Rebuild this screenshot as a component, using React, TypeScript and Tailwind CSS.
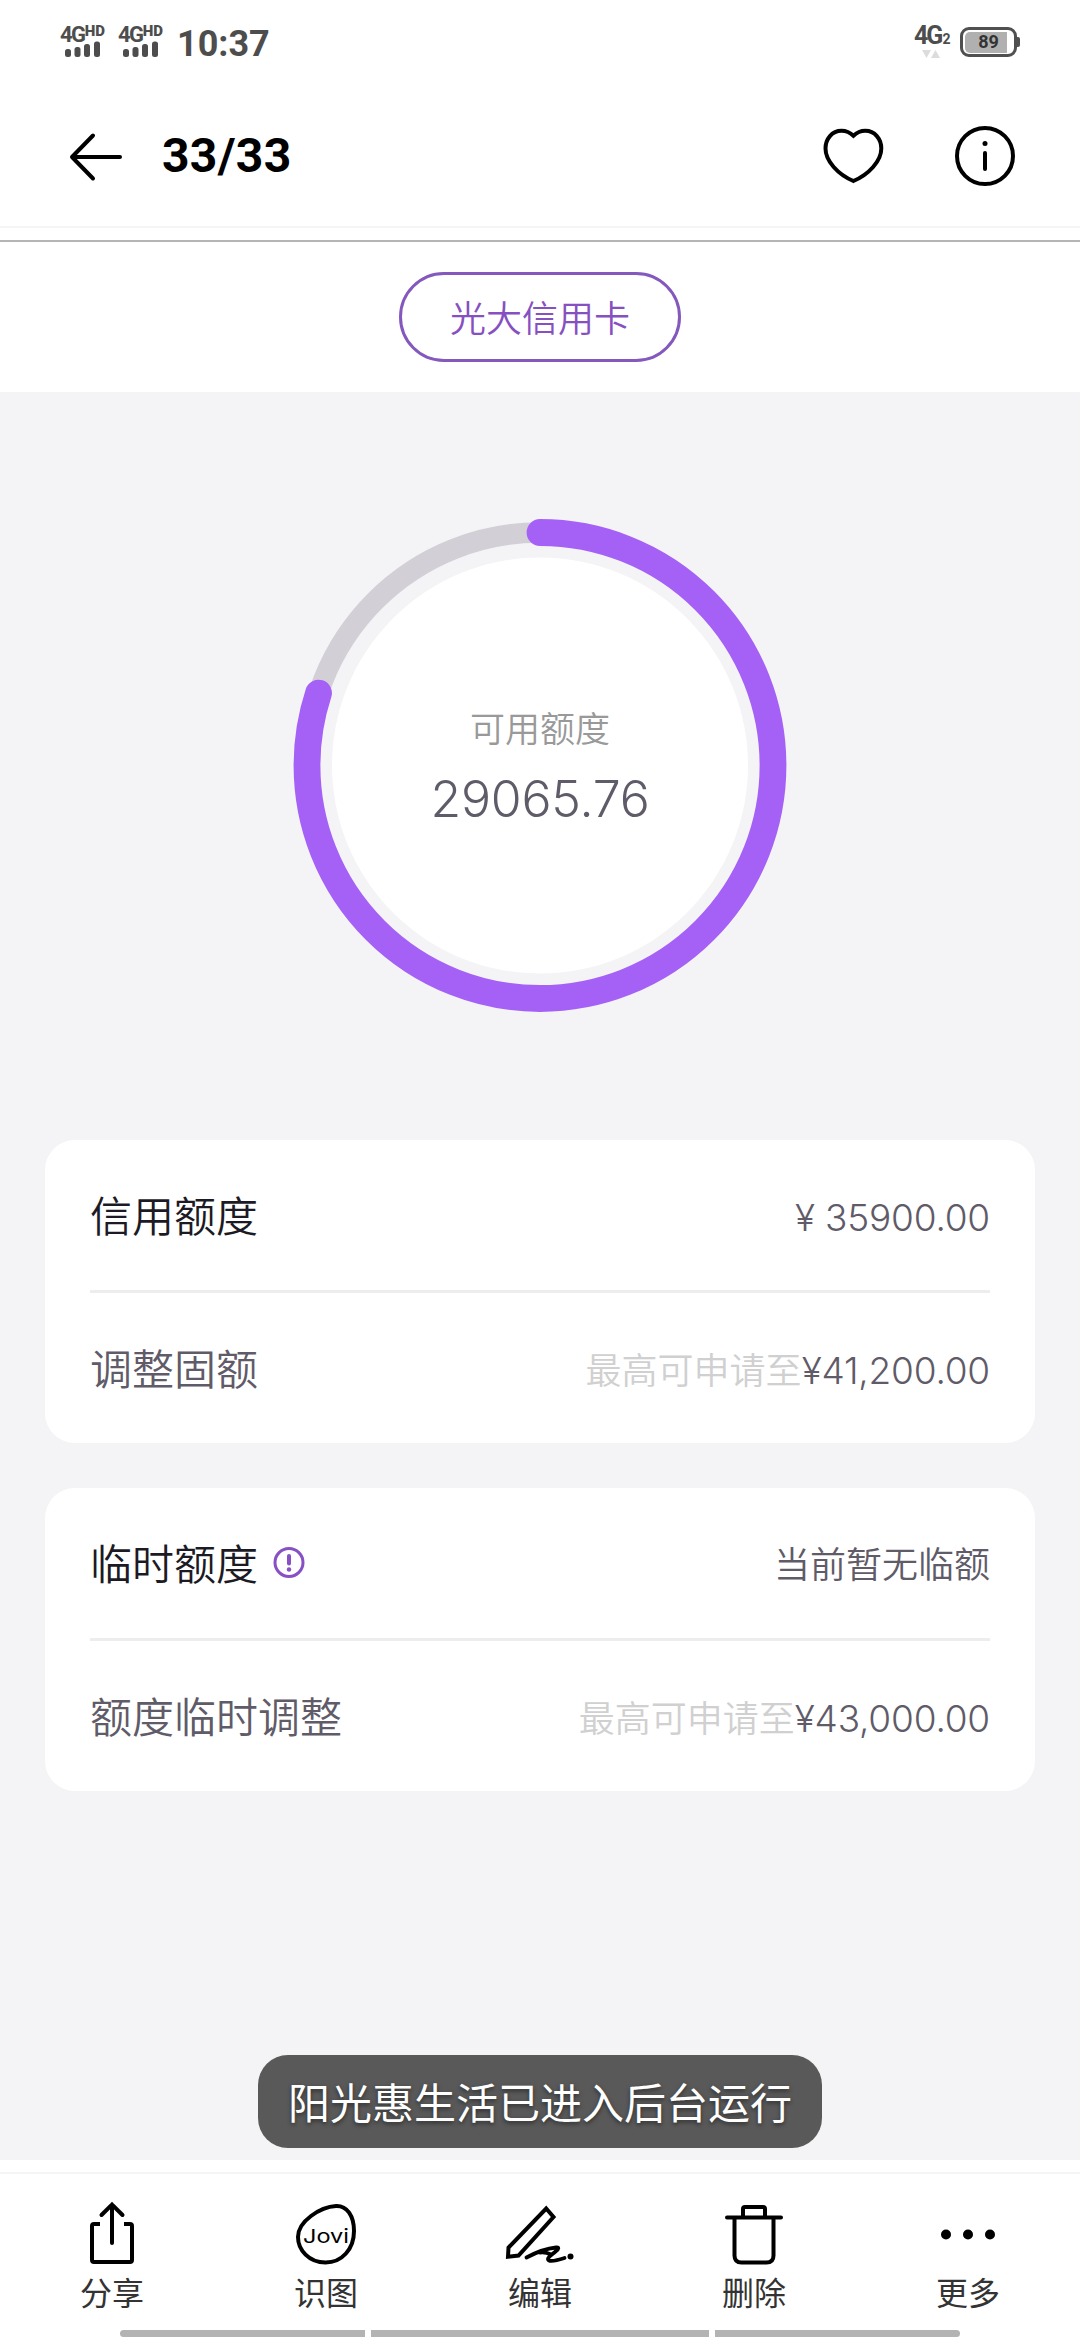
import React from 'react';

const SignalIcon: React.FC = () => (
  <div className="flex w-[58px] flex-col items-start">
    <div className="flex h-[18px] items-start text-[#4d4d4d]">
      <span className="text-[22px] font-bold leading-[20px] tracking-[-1.5px]">4G</span>
      <span className="text-[15px] font-black leading-[13px]">HD</span>
    </div>
    <svg width="40" height="18" viewBox="0 0 40 18" fill="#4d4d4d" className="-mt-[3px] ml-[3px]">
      <rect x="2" y="9" width="6" height="8" rx="2.5" />
      <rect x="11.5" y="7" width="6" height="10" rx="2.5" />
      <rect x="21" y="4" width="6" height="13" rx="2.5" />
      <rect x="31" y="1.5" width="6" height="15.5" rx="2.5" />
    </svg>
  </div>
);

const StatusBar: React.FC = () => (
  <div className="flex h-[84px] items-start justify-between pl-[60px] pr-[60px] font-[Roboto,sans-serif]">
    <div className="flex pt-[25px]">
      <SignalIcon />
      <SignalIcon />
      <span className="-mt-[3px] ml-[1px] text-[36px] font-bold leading-[44px] text-[#4d4d4d]">10:37</span>
    </div>
    <div className="flex pt-[23px] text-[#4d4d4d]">
      <div className="mr-[11px] w-[35px]">
        <div className="flex h-[24px] items-baseline">
          <span className="text-[25px] font-bold leading-[25px] tracking-[-2px]">4G</span>
          <span className="ml-[1px] text-[14px] font-bold leading-[24px]">2</span>
        </div>
        <svg width="20" height="10" viewBox="0 0 20 10" fill="#dcdcdc" className="ml-[7px] mt-[2px]">
          <path d="M1 1h9l-4.500 8zM10 9h9l-4.500-8z" />
        </svg>
      </div>
      <div className="mt-[4px] flex h-[30px] items-center self-start">
        <div className="h-[30px] w-[57px] rounded-[9px] border-[3px] border-[#505050] p-[1.500px]">
          <div className="flex h-full w-[42px] items-center justify-center rounded-l-[5px] bg-[#b0b0b0] pl-[6px]">
            <span className="text-[18px] font-bold leading-none text-[#333]">89</span>
          </div>
        </div>
        <div className="h-[10px] w-[3px] rounded-r-[2px] bg-[#505050]" />
      </div>
    </div>
  </div>
);

const Header: React.FC = () => (
  <div className="flex h-[144px] items-center border-b-2 border-[#f5f5f5] px-[64px]">
    <svg width="64" height="64" viewBox="0 0 64 64" fill="none" stroke="#000" strokeWidth="4" strokeLinecap="round" strokeLinejoin="round">
      <path d="M56 34H8M29 12.500L8 34l21 21.500" />
    </svg>
    <h1 className="ml-[34px] pt-[2px] font-[Roboto,sans-serif] text-[48px] font-bold leading-none tracking-[0.3px] text-black">33/33</h1>
    <svg width="64" height="64" viewBox="0 0 64 64" fill="none" stroke="#000" strokeWidth="4" className="ml-auto">
      <path d="M32.400 12.800C29 9.500 25 7.800 20.500 7.800C11 7.800 4.500 16 4.500 25.500C4.500 38 17 51.500 32.400 58C47.800 51.500 60.300 38 60.300 25.500C60.300 16 53.800 7.800 44.300 7.800C39.800 7.800 35.800 9.500 32.400 12.800Z" />
    </svg>
    <svg width="64" height="64" viewBox="0 0 64 64" fill="none" stroke="#000" strokeWidth="4" className="-mr-[1px] ml-[68px]">
      <circle cx="32" cy="33" r="28" />
      <circle cx="32" cy="20.500" r="2.500" fill="#000" stroke="none" />
      <path d="M32 30v16" strokeLinecap="round" />
    </svg>
  </div>
);

const RADIUS = 233;
const CIRCUMFERENCE = 2 * Math.PI * RADIUS;
const USED = 0.8;

const QuotaRing: React.FC = () => (
  <div className="grid h-[748px] place-items-center">
    <svg width="494" height="494" viewBox="0 0 494 494" fill="none" className="col-start-1 row-start-1">
      <circle cx="247" cy="246.500" r="208" fill="#fff" />
      <circle cx="247" cy="246.500" r={RADIUS} stroke="#d2d0d6" strokeWidth="20.500" />
      <circle
        cx="247"
        cy="246.500"
        r={RADIUS}
        stroke="#a561f6"
        strokeWidth="26.800"
        strokeLinecap="round"
        strokeDasharray={`${CIRCUMFERENCE * USED} ${CIRCUMFERENCE}`}
        transform="rotate(-90 247 246.500)"
      />
    </svg>
    <div className="col-start-1 row-start-1 flex flex-col items-center">
      <span className="text-[35px] font-[350] leading-[52px] text-[#999]">可用额度</span>
      <span className="mt-[14px] text-[50px] font-light leading-[60px] tracking-[-0.2px] text-[#5f5b68]">29065.76</span>
    </div>
  </div>
);

interface RowProps {
  label: string;
  value: string;
  hint?: string;
  strong?: boolean;
  info?: boolean;
}

const Row: React.FC<RowProps> = ({ label, value, hint, strong, info }) => (
  <div className="flex h-[150px] items-center justify-between">
    <div className="flex items-center">
      <span className={`pt-[4px] text-[42px] font-[350] leading-none ${strong ? 'text-[#1c1a24]' : 'text-[#5f5b68]'}`}>{label}</span>
      {info && (
        <svg width="34" height="34" viewBox="0 0 34 34" fill="none" stroke="#8750c4" className="ml-[14px]">
          <circle cx="17" cy="16.500" r="14" strokeWidth="3" />
          <path d="M17 10v7.500" strokeWidth="4" strokeLinecap="round" />
          <circle cx="17" cy="23.500" r="2.200" fill="#8750c4" stroke="none" />
        </svg>
      )}
    </div>
    <div className="flex items-baseline pt-[4px] text-[36px] font-[350] leading-none text-[#5f5b68]">
      {hint && <span className="text-[#d0d0d0]">{hint}</span>}
      {/[0-9]/.test(value) ? <span className="text-[37px] font-light tracking-[-0.2px]">{value}</span> : <span>{value}</span>}
    </div>
  </div>
);

const Card: React.FC<{ rows: RowProps[] }> = ({ rows }) => (
  <div className="rounded-[30px] bg-white px-[45px]">
    <Row {...rows[0]} />
    <div className="h-[3px] bg-[#ededed]" />
    <Row {...rows[1]} />
  </div>
);

const ShareIcon = () => (
  <svg width="80" height="72" viewBox="0 0 80 72" fill="none" stroke="#000" strokeWidth="4">
    <path d="M28 28h-6q-2 0-2 2v34q0 2 2 2h36q2 0 2-2V30q0-2-2-2h-6" />
    <path d="M40 47V8.500M29.500 19L40 8.500l10.500 10.500" strokeLinecap="round" />
  </svg>
);

const JoviIcon = () => (
  <svg width="80" height="72" viewBox="0 0 80 72" fill="none">
    <path
      d="M50 10C61 9.500 68 20 68 35C68 53 56 66.500 39.500 66.500C23 66.500 12 54 12 41C12 32 17 26 25 20C33 14 42 10.400 50 10Z"
      stroke="#000"
      strokeWidth="4"
    />
    <text x="17" y="46.500" textLength="46" lengthAdjust="spacingAndGlyphs" fontSize="19" fontFamily="Inter" fill="#000">
      Jovi
    </text>
  </svg>
);

const EditIcon = () => (
  <svg width="80" height="72" viewBox="0 0 80 72" fill="none" stroke="#000" strokeWidth="4" strokeLinejoin="round" strokeLinecap="round">
    <path d="M46.200 12.500L53.500 21L18.500 59.500L8 60.700L8.500 51.500Z" strokeLinejoin="miter" />
    <path d="M26.500 61.500C34 57.500 46 52.500 56 51.500C61 51 57 54.500 52.500 58C48.500 61 46 64 50 64.800C54 65.500 60 63.500 64.500 62M40 56.500C44 56 48 57 51 58.500" strokeWidth="3.800" />
    <circle cx="70.500" cy="60.500" r="3" fill="#000" stroke="none" />
  </svg>
);

const TrashIcon = () => (
  <svg width="80" height="72" viewBox="0 0 80 72" fill="none" stroke="#000" strokeWidth="4" strokeLinecap="round">
    <path d="M13 21.500h54M29 20v-7q0-2 2-2h18q2 0 2 2v7" />
    <path d="M20.500 22v37.500q0 7 7 7h25q7 0 7-7V22" />
  </svg>
);

const MoreIcon = () => (
  <svg width="80" height="72" viewBox="0 0 80 72" fill="#000">
    <circle cx="18" cy="38.500" r="5" />
    <circle cx="40" cy="38.500" r="5" />
    <circle cx="62" cy="38.500" r="5" />
  </svg>
);

const actions = [
  { label: '分享', icon: <ShareIcon /> },
  { label: '识图', icon: <JoviIcon /> },
  { label: '编辑', icon: <EditIcon /> },
  { label: '删除', icon: <TrashIcon /> },
  { label: '更多', icon: <MoreIcon /> },
];

const App: React.FC = () => {
  return (
    <div className="flex h-[2340px] w-[1080px] flex-col overflow-hidden bg-white font-[Inter,'Noto_Sans_CJK_SC',sans-serif]">
      <StatusBar />
      <Header />

      {/* Photo content */}
      <div className="mt-[12px] flex h-[152px] items-center justify-center border-t-2 border-[#b5b5b5]">
        <span className="flex h-[90px] w-[282px] items-center justify-center rounded-full border-[3px] border-[#8458bd] pt-[3px] text-[36px] font-[350] text-[#8750c0]">
          光大信用卡
        </span>
      </div>
      <div className="flex h-[1768px] flex-col bg-[#f4f4f6] px-[45px]">
        <QuotaRing />
        <div className="flex flex-col gap-[45px]">
          <Card
            rows={[
              { label: '信用额度', value: '¥ 35900.00', strong: true },
              { label: '调整固额', hint: '最高可申请至', value: '¥41,200.00' },
            ]}
          />
          <Card
            rows={[
              { label: '临时额度', value: '当前暂无临额', strong: true, info: true },
              { label: '额度临时调整', hint: '最高可申请至', value: '¥43,000.00' },
            ]}
          />
        </div>
        <div className="mb-[12px] mt-auto flex h-[93px] items-center self-center rounded-[30px] bg-[#595959] px-[30px] pt-[4px] text-[42px] text-white text-shadow-[0_2px_4px_rgba(0,0,0,0.5)]">
          阳光惠生活已进入后台运行
        </div>
      </div>

      {/* Bottom actions */}
      <div className="mt-[12px] flex h-[158px] justify-center border-t-2 border-[#f5f5f5] pt-[22px]">
        {actions.map((action) => (
          <div key={action.label} className="flex w-[214px] flex-col items-center">
            {action.icon}
            <span className="mt-[9px] text-[32px] leading-[34px] text-[#333]">{action.label}</span>
          </div>
        ))}
      </div>
      <div className="flex gap-[6px] px-[120px]">
        <div className="h-[7px] w-[245px] rounded-l-full bg-[#b3b3b3]" />
        <div className="h-[7px] w-[338px] bg-[#b3b3b3]" />
        <div className="h-[7px] w-[245px] rounded-r-full bg-[#b3b3b3]" />
      </div>
    </div>
  );
};

export default App;
